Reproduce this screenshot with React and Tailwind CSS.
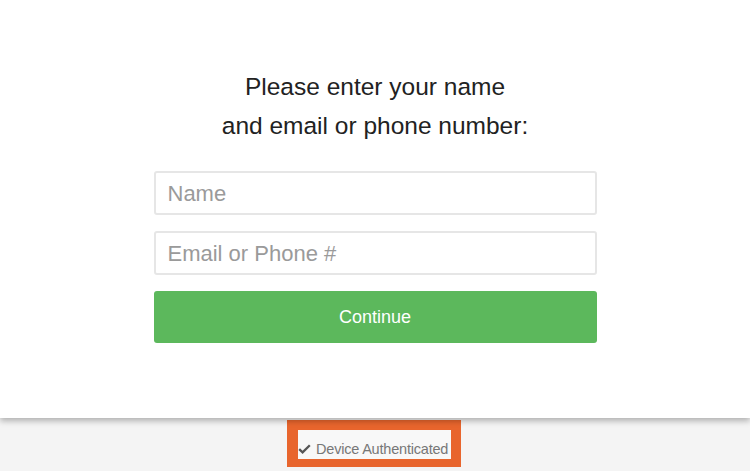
import React from "react";

const App = () => {
  return (
    <div className="flex h-[471px] w-[750px] flex-col overflow-hidden bg-[#f4f4f4] font-['Liberation_Sans',Arial,sans-serif]">
      {/* Main card */}
      <div className="relative z-10 flex h-[418px] flex-col items-center bg-white pt-[67px] shadow-[0_3px_6px_rgba(0,0,0,0.28)]">
        <h1 className="text-center text-[24.5px] leading-[39px] text-[#222]">
          Please enter your name
          <br />
          and email or phone number:
        </h1>

        <form className="mt-[26px] flex w-[443px] flex-col gap-4" onSubmit={(e) => e.preventDefault()}>
          <input
            type="text"
            placeholder="Name"
            className="h-[44px] w-full rounded-[3px] border-2 border-[#e6e6e6] bg-white px-3 pt-[1px] text-[22px] text-[#333] outline-none placeholder:text-[#9a9a9a]"
          />
          <input
            type="text"
            placeholder="Email or Phone #"
            className="h-[44px] w-full rounded-[3px] border-2 border-[#e6e6e6] bg-white px-3 pt-[1px] text-[22px] text-[#333] outline-none placeholder:text-[#9a9a9a]"
          />
          <button
            type="submit"
            className="h-[52px] w-full rounded-[3px] bg-[#5cb85c] text-[18px] text-white"
          >
            Continue
          </button>
        </form>
      </div>

      {/* Footer */}
      <div className="flex flex-1 items-start justify-center pt-[2px]">
        <div className="ml-[-2px] flex h-[47px] w-[174px] items-start overflow-hidden border-b-[8px] border-l-[11px] border-r-[10px] border-t-[10px] border-[#e8652d] bg-[#f8f8f8] pt-[11px]">
          <span className="flex items-center gap-[5px] whitespace-nowrap text-[14.5px] leading-[16px] tracking-[-0.2px] text-[#777]">
            <svg width="13" height="10" viewBox="0 0 13 10" fill="none">
              <path d="M1.2 5.2 L4.6 8.4 L11.8 1.2" stroke="#555" strokeWidth="2.3" />
            </svg>
            Device Authenticated
          </span>
        </div>
      </div>
    </div>
  );
};

export default App;
